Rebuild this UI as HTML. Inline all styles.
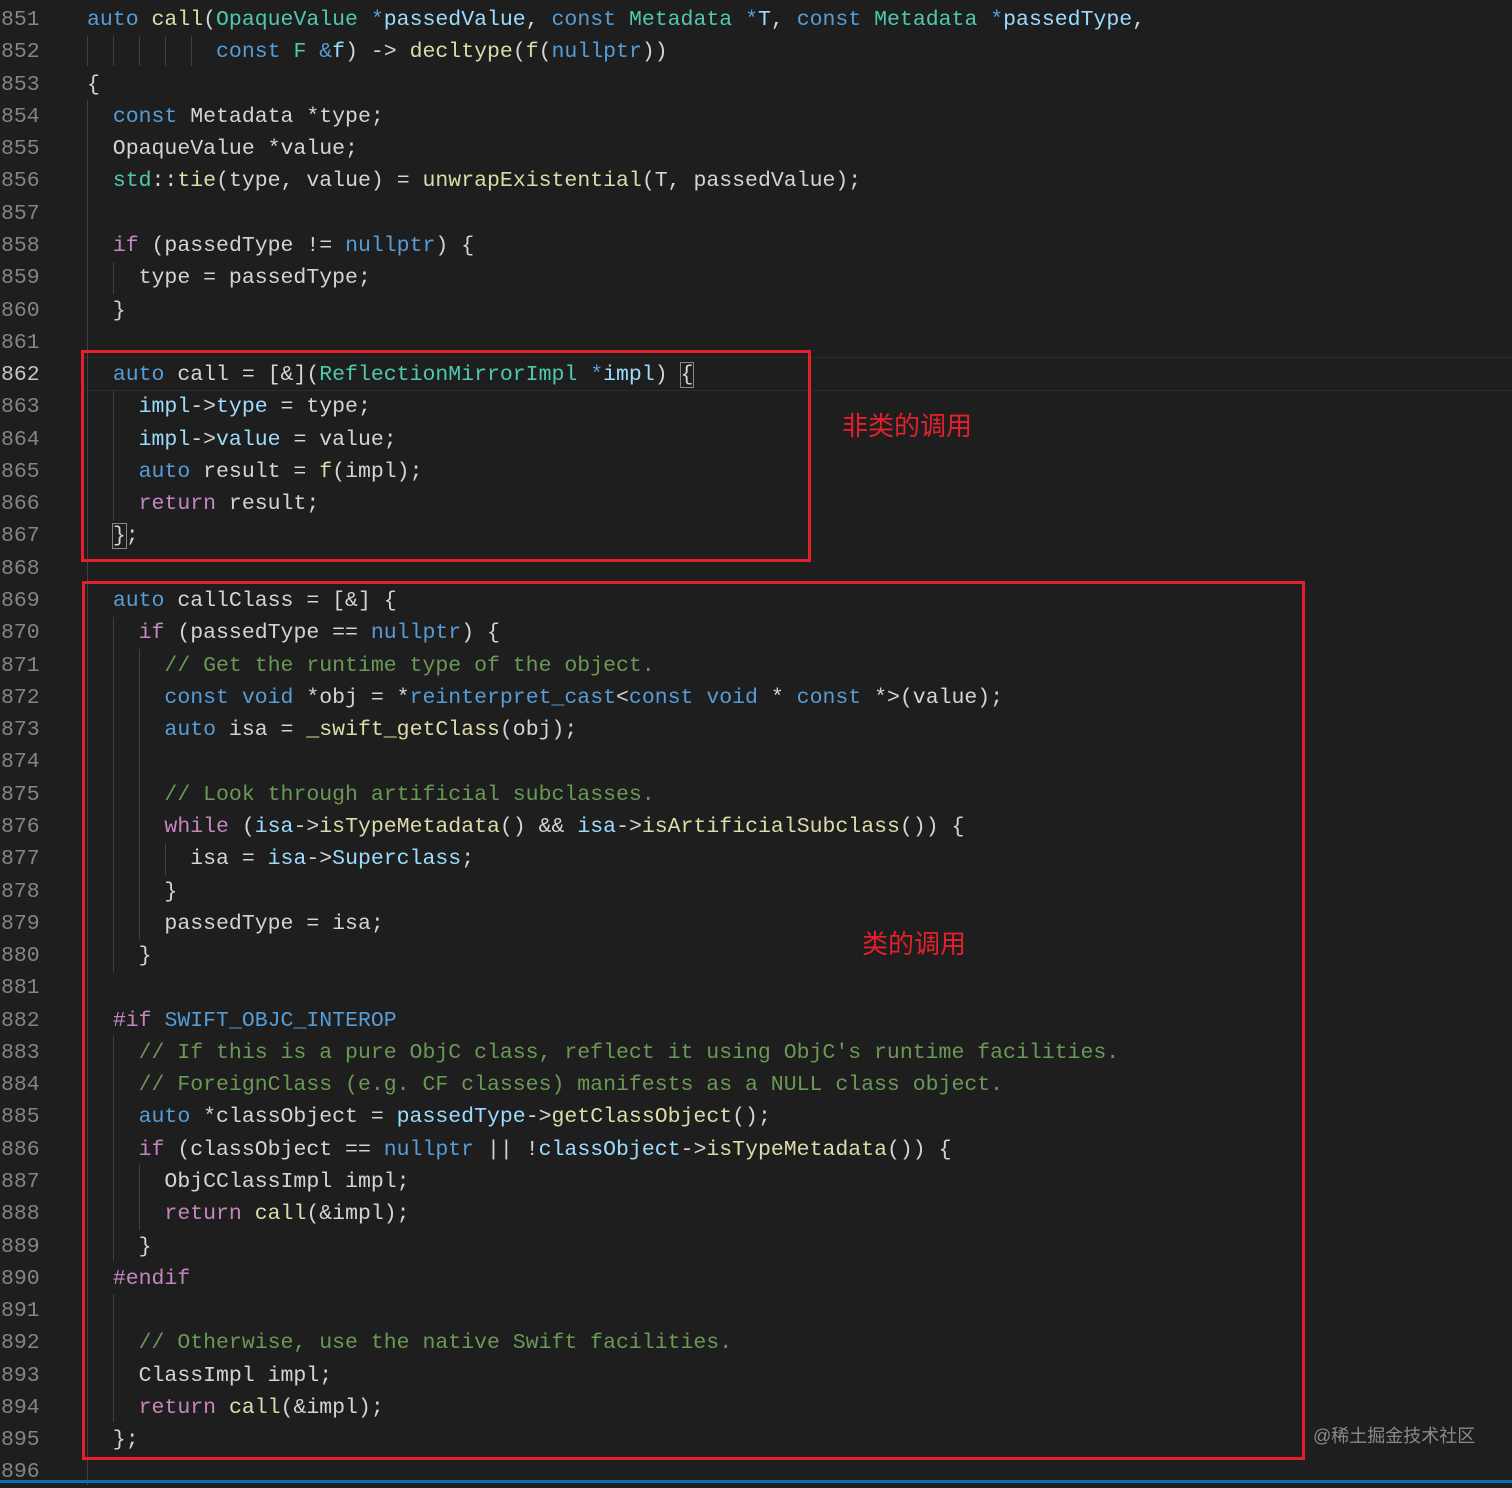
<!DOCTYPE html>
<html><head><meta charset="utf-8"><style>
body{margin:0;background:#1e1e1e;width:1512px;height:1483px;overflow:hidden;position:relative;font-family:"Liberation Mono",monospace;}
#w{position:absolute;left:0;top:2px;width:1512px;height:1483px;}
.l{position:absolute;left:0;height:32px;line-height:32px;font-size:21.5px;white-space:pre;color:#d4d4d4;}
.n{position:absolute;left:1px;width:40px;color:#858585;}
.c{position:absolute;left:87px;}
.k{color:#569cd6}.t{color:#4ec9b0}.f{color:#dcdcaa}.v{color:#9cdcfe}.p{color:#c586c0}.m{color:#6a9955}
.g{position:absolute;width:1px;background:#404040;}
.box{position:absolute;border:3px solid #e3202b;box-sizing:border-box;}
.cn{position:absolute;color:#e3202b;font-family:"Liberation Sans","Noto Sans CJK SC",sans-serif;font-size:26px;}
</style></head><body>
<div id="w">
<div style="position:absolute;left:82px;top:355px;width:1430px;height:32px;border-top:1px solid #2c2c2c;border-bottom:1px solid #2c2c2c"></div>
<div class="g" style="left:87px;top:98px;height:1385px"></div>
<div class="g" style="left:87px;top:34px;height:30px"></div>
<div class="g" style="left:113px;top:34px;height:30px"></div>
<div class="g" style="left:139px;top:34px;height:30px"></div>
<div class="g" style="left:165px;top:34px;height:30px"></div>
<div class="g" style="left:191px;top:34px;height:30px"></div>
<div class="g" style="left:113px;top:260px;height:32px"></div>
<div class="g" style="left:113px;top:389px;height:130px"></div>
<div class="g" style="left:113px;top:615px;height:355px"></div>
<div class="g" style="left:139px;top:647px;height:290px"></div>
<div class="g" style="left:165px;top:841px;height:32px"></div>
<div class="g" style="left:113px;top:1034px;height:225px"></div>
<div class="g" style="left:139px;top:1163px;height:65px"></div>
<div class="g" style="left:113px;top:1292px;height:128px"></div>
<div class="l" style="top:2px"><span class="n">851</span><span class="c"><span class="k">auto</span> <span class="f">call</span>(<span class="t">OpaqueValue</span> <span class="k">*</span><span class="v">passedValue</span>, <span class="k">const</span> <span class="t">Metadata</span> <span class="k">*</span><span class="v">T</span>, <span class="k">const</span> <span class="t">Metadata</span> <span class="k">*</span><span class="v">passedType</span>,</span></div>
<div class="l" style="top:34.3px"><span class="n">852</span><span class="c">          <span class="k">const</span> <span class="t">F</span> <span class="k">&amp;</span><span class="v">f</span>) -&gt; <span class="f">decltype</span>(<span class="f">f</span>(<span class="k">nullptr</span>))</span></div>
<div class="l" style="top:66.5px"><span class="n">853</span><span class="c">{</span></div>
<div class="l" style="top:98.8px"><span class="n">854</span><span class="c">  <span class="k">const</span> Metadata *type;</span></div>
<div class="l" style="top:131.1px"><span class="n">855</span><span class="c">  OpaqueValue *value;</span></div>
<div class="l" style="top:163.4px"><span class="n">856</span><span class="c">  <span class="t">std</span>::<span class="f">tie</span>(type, value) = <span class="f">unwrapExistential</span>(T, passedValue);</span></div>
<div class="l" style="top:195.6px"><span class="n">857</span></div>
<div class="l" style="top:227.9px"><span class="n">858</span><span class="c">  <span class="p">if</span> (passedType != <span class="k">nullptr</span>) {</span></div>
<div class="l" style="top:260.2px"><span class="n">859</span><span class="c">    type = passedType;</span></div>
<div class="l" style="top:292.5px"><span class="n">860</span><span class="c">  }</span></div>
<div class="l" style="top:324.8px"><span class="n">861</span></div>
<div class="l" style="top:357px"><span class="n" style="color:#c6c6c6">862</span><span class="c">  <span class="k">auto</span> call = [&amp;](<span class="t">ReflectionMirrorImpl</span> <span class="k">*</span><span class="v">impl</span>) <span style="outline:1px solid #888">{</span></span></div>
<div class="l" style="top:389.3px"><span class="n">863</span><span class="c">    <span class="v">impl</span>-&gt;<span class="v">type</span> = type;</span></div>
<div class="l" style="top:421.6px"><span class="n">864</span><span class="c">    <span class="v">impl</span>-&gt;<span class="v">value</span> = value;</span></div>
<div class="l" style="top:453.9px"><span class="n">865</span><span class="c">    <span class="k">auto</span> result = <span class="f">f</span>(impl);</span></div>
<div class="l" style="top:486.1px"><span class="n">866</span><span class="c">    <span class="p">return</span> result;</span></div>
<div class="l" style="top:518.4px"><span class="n">867</span><span class="c">  <span style="outline:1px solid #888">}</span>;</span></div>
<div class="l" style="top:550.7px"><span class="n">868</span></div>
<div class="l" style="top:583px"><span class="n">869</span><span class="c">  <span class="k">auto</span> callClass = [&amp;] {</span></div>
<div class="l" style="top:615.2px"><span class="n">870</span><span class="c">    <span class="p">if</span> (passedType == <span class="k">nullptr</span>) {</span></div>
<div class="l" style="top:647.5px"><span class="n">871</span><span class="c">      <span class="m">// Get the runtime type of the object.</span></span></div>
<div class="l" style="top:679.8px"><span class="n">872</span><span class="c">      <span class="k">const</span> <span class="k">void</span> *obj = *<span class="k">reinterpret_cast</span>&lt;<span class="k">const</span> <span class="k">void</span> * <span class="k">const</span> *&gt;(value);</span></div>
<div class="l" style="top:712.1px"><span class="n">873</span><span class="c">      <span class="k">auto</span> isa = <span class="f">_swift_getClass</span>(obj);</span></div>
<div class="l" style="top:744.4px"><span class="n">874</span></div>
<div class="l" style="top:776.6px"><span class="n">875</span><span class="c">      <span class="m">// Look through artificial subclasses.</span></span></div>
<div class="l" style="top:808.9px"><span class="n">876</span><span class="c">      <span class="p">while</span> (<span class="v">isa</span>-&gt;<span class="f">isTypeMetadata</span>() &amp;&amp; <span class="v">isa</span>-&gt;<span class="f">isArtificialSubclass</span>()) {</span></div>
<div class="l" style="top:841.2px"><span class="n">877</span><span class="c">        isa = <span class="v">isa</span>-&gt;<span class="v">Superclass</span>;</span></div>
<div class="l" style="top:873.5px"><span class="n">878</span><span class="c">      }</span></div>
<div class="l" style="top:905.7px"><span class="n">879</span><span class="c">      passedType = isa;</span></div>
<div class="l" style="top:938px"><span class="n">880</span><span class="c">    }</span></div>
<div class="l" style="top:970.3px"><span class="n">881</span></div>
<div class="l" style="top:1002.6px"><span class="n">882</span><span class="c">  <span class="p">#if</span> <span class="k">SWIFT_OBJC_INTEROP</span></span></div>
<div class="l" style="top:1034.8px"><span class="n">883</span><span class="c">    <span class="m">// If this is a pure ObjC class, reflect it using ObjC's runtime facilities.</span></span></div>
<div class="l" style="top:1067.1px"><span class="n">884</span><span class="c">    <span class="m">// ForeignClass (e.g. CF classes) manifests as a NULL class object.</span></span></div>
<div class="l" style="top:1099.4px"><span class="n">885</span><span class="c">    <span class="k">auto</span> *classObject = <span class="v">passedType</span>-&gt;<span class="f">getClassObject</span>();</span></div>
<div class="l" style="top:1131.7px"><span class="n">886</span><span class="c">    <span class="p">if</span> (classObject == <span class="k">nullptr</span> || !<span class="v">classObject</span>-&gt;<span class="f">isTypeMetadata</span>()) {</span></div>
<div class="l" style="top:1163.9px"><span class="n">887</span><span class="c">      ObjCClassImpl impl;</span></div>
<div class="l" style="top:1196.2px"><span class="n">888</span><span class="c">      <span class="p">return</span> <span class="f">call</span>(&amp;impl);</span></div>
<div class="l" style="top:1228.5px"><span class="n">889</span><span class="c">    }</span></div>
<div class="l" style="top:1260.8px"><span class="n">890</span><span class="c">  <span class="p">#endif</span></span></div>
<div class="l" style="top:1293px"><span class="n">891</span></div>
<div class="l" style="top:1325.3px"><span class="n">892</span><span class="c">    <span class="m">// Otherwise, use the native Swift facilities.</span></span></div>
<div class="l" style="top:1357.6px"><span class="n">893</span><span class="c">    ClassImpl impl;</span></div>
<div class="l" style="top:1389.9px"><span class="n">894</span><span class="c">    <span class="p">return</span> <span class="f">call</span>(&amp;impl);</span></div>
<div class="l" style="top:1422.2px"><span class="n">895</span><span class="c">  };</span></div>
<div class="l" style="top:1454.4px"><span class="n">896</span></div>
</div>
<div class="box" style="left:81px;top:350px;width:730px;height:212px"></div>
<div class="box" style="left:82px;top:581px;width:1223px;height:879px"></div>
<div class="cn" style="left:842px;top:406px">非类的调用</div>
<div class="cn" style="left:862px;top:924px">类的调用</div>
<div style="position:absolute;left:1313px;top:1422px;color:#8a8a8a;font-family:'Liberation Sans','Noto Sans CJK SC',sans-serif;font-size:18px">@稀土掘金技术社区</div>
<div style="position:absolute;left:0;top:1480px;width:1512px;height:3px;background:#0e6fb8"></div>
</body></html>
